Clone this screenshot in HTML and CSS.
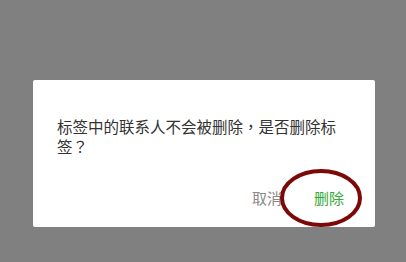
FILE: index.html
```html
<!DOCTYPE html>
<html lang="zh-CN">
<head>
<meta charset="utf-8">
<link rel="stylesheet" href="styles.css">
</head>
<body>
<div class="dialog">
  <p class="msg">标签中的联系人不会被删除<span class="punct" lang="zh-TW">，</span>是否删除标签<span class="punct" lang="zh-TW">？</span></p>
  <div class="actions">
    <span class="btn cancel">取消</span>
    <span class="btn confirm">删除</span>
  </div>
  <svg class="mark" width="86" height="62" viewBox="0 0 86 62">
    <ellipse cx="43" cy="31" rx="39" ry="27" fill="none" stroke="#7d0808" stroke-width="4"/>
  </svg>
</div>
</body>
</html>
```
FILE: styles.css
```css
html, body {
  margin: 0;
  padding: 0;
}
body {
  background: #808080;
  width: 406px;
  height: 262px;
  overflow: hidden;
  font-family: "Noto Sans CJK SC", "Noto Sans", sans-serif;
}
.dialog {
  position: relative;
  box-sizing: border-box;
  margin: 80px 0 0 33px;
  width: 342px;
  height: 147px;
  background: #fff;
  border-radius: 2px;
  padding: 36px 24px 0 24px;
}
.msg {
  margin: 0;
  width: 285px;
  font-size: 15.5px;
  line-height: 20px;
  color: #333333;
}
.punct {
  font-family: "Noto Sans CJK TC", "Noto Sans CJK SC", sans-serif;
}
.actions {
  display: flex;
  justify-content: flex-end;
  gap: 32px;
  margin-top: 32px;
  padding-right: 7px;
  font-size: 15px;
  line-height: 20px;
}
.cancel {
  color: #8a8a8a;
}
.confirm {
  color: #36a936;
}
.mark {
  position: absolute;
  left: 245px;
  top: 87px;
}
```
